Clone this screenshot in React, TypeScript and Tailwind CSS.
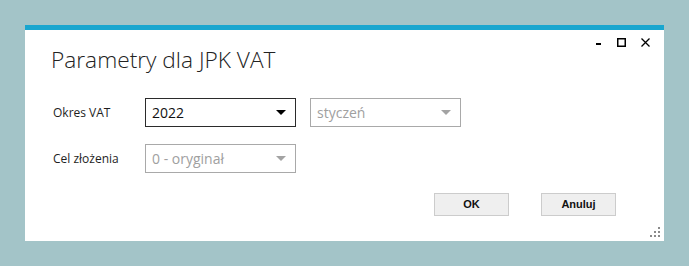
import React from 'react';

function Combo({ value, disabled }: { value: string; disabled?: boolean }) {
  return (
    <div
      className={`flex h-[29px] w-[151px] items-center justify-between border pl-[6px] pr-[9px] ${
        disabled ? 'border-[#a9a9a9] text-[#a0a0a0]' : 'border-[#2b2b2b] text-[#111]'
      }`}
    >
      <span className="text-[14px] leading-none">{value}</span>
      <svg width="10" height="5" viewBox="0 0 10 5">
        <path d="M0 0h10L5 5z" fill={disabled ? '#a3a3a3' : '#000'} />
      </svg>
    </div>
  );
}

function Btn({ children }: { children: React.ReactNode }) {
  return (
    <button className="h-[23px] w-[75px] border border-[#cccccc] bg-[#efefef] text-[11px] font-bold text-[#111] font-['Liberation_Sans',Arial,sans-serif]">
      {children}
    </button>
  );
}

export default function App() {
  return (
    <div className="h-[266px] w-[689px] bg-[#a3c4c8] pl-[25px] pt-[25px] font-['Open_Sans','Noto_Sans',sans-serif]">
      <div className="relative flex h-[216px] w-[639px] flex-col border-t-[5px] border-[#19a6cf] bg-white">
        <div className="flex justify-between">
          <h1 className="ml-[26px] mt-[14px] text-[22.7px] font-light leading-[32px] text-[#222]">
            Parametry dla JPK VAT
          </h1>
          <div className="mr-[14px] mt-[8px] flex h-[9px] items-center gap-[15px]">
            <svg width="6" height="9" viewBox="0 0 6 9">
              <rect x="0" y="5" width="5" height="2" fill="#000" />
            </svg>
            <svg width="9" height="9" viewBox="0 0 9 9">
              <rect x="0.75" y="0.75" width="7.5" height="7.5" fill="none" stroke="#000" strokeWidth="1.5" />
            </svg>
            <svg width="9" height="9" viewBox="0 0 9 9">
              <path d="M0.5 0.5l8 8M8.5 0.5l-8 8" stroke="#000" strokeWidth="1.3" />
            </svg>
          </div>
        </div>

        <div className="ml-[28px] mt-[22px] flex flex-col gap-[17px] text-[12px] text-[#1e1e1e]">
          <div className="flex items-center">
            <span className="w-[92px]">Okres VAT</span>
            <div className="flex gap-[14px]">
              <Combo value="2022" />
              <Combo value="styczeń" disabled />
            </div>
          </div>
          <div className="flex items-center">
            <span className="w-[92px]">Cel złożenia</span>
            <Combo value="0 - oryginał" disabled />
          </div>
        </div>

        <div className="mr-[48px] mt-[20px] flex justify-end gap-[32px]">
          <Btn>OK</Btn>
          <Btn>Anuluj</Btn>
        </div>

        <svg className="absolute bottom-[4px] right-[4px]" width="10" height="10" viewBox="0 0 10 10">
          <rect x="8" y="0" width="2" height="2" fill="#8a8a8a" />
          <rect x="4" y="4" width="2" height="2" fill="#8a8a8a" />
          <rect x="8" y="4" width="2" height="2" fill="#8a8a8a" />
          <rect x="0" y="8" width="2" height="2" fill="#8a8a8a" />
          <rect x="4" y="8" width="2" height="2" fill="#8a8a8a" />
          <rect x="8" y="8" width="2" height="2" fill="#8a8a8a" />
        </svg>
      </div>
    </div>
  );
}
